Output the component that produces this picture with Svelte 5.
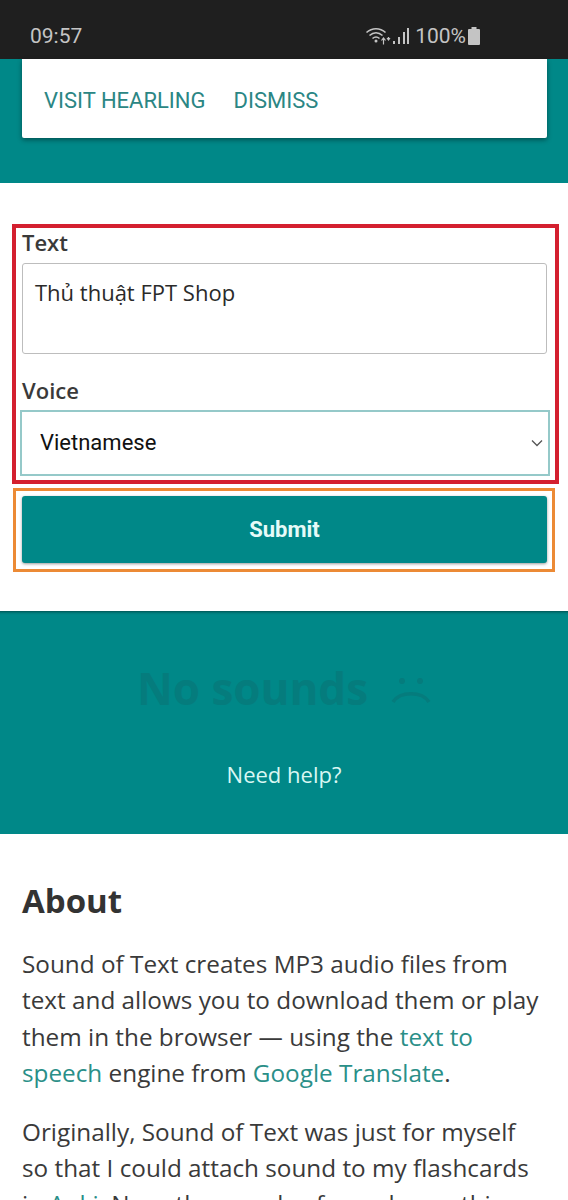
<script>
	let text = $state('Thủ thuật FPT Shop');
	let voice = $state('vi');
</script>

<div class="page">
	<header class="status">
		<span class="time">09:57</span>
		<div class="status-right">
			<svg class="wifi" width="26" height="20" viewBox="0 0 26 20" fill="none" stroke="#c4c4c4">
				<path d="M1.5 6.5C7 1.5 15 1.5 20.5 6.5" stroke-width="1.6" />
				<path d="M4.5 9.5C8.5 6 13.5 6 17.5 9.5" stroke-width="1.6" />
				<path d="M7.5 12.5C9.8 10.5 12.2 10.5 14.5 12.5" stroke-width="1.6" />
				<circle cx="11" cy="15" r="1.5" fill="#c4c4c4" stroke="none" />
				<path d="M16.5 14.5l2-2.5 2 2.5M18.5 12.5v6M22 12l1.5 2 1.5-2M23.5 14v-3" stroke-width="1.2" />
			</svg>
			<svg class="bars" width="17" height="18" viewBox="0 0 17 18" fill="#c4c4c4">
				<rect x="0" y="14" width="2" height="3" />
				<rect x="5" y="10" width="2" height="7" />
				<rect x="10" y="5" width="2" height="12" />
				<rect x="14" y="1" width="2" height="16" />
			</svg>
			<span class="pct">100%</span>
			<svg class="battery" width="12" height="18" viewBox="0 0 12 18" fill="#c4c4c4">
				<path d="M3.5 0h5v2h2.5a1 1 0 0 1 1 1v14a1 1 0 0 1-1 1h-10a1 1 0 0 1-1-1v-14a1 1 0 0 1 1-1h2.5z" />
			</svg>
		</div>
	</header>

	<section class="banner">
		<div class="card">
			<a href="#hearling">VISIT HEARLING</a>
			<a href="#dismiss">DISMISS</a>
		</div>
	</section>

	<section class="form-wrap">
		<div class="red-box">
			<label class="label" for="text">Text</label>
			<textarea id="text" bind:value={text}></textarea>
			<label class="label voice-label" for="voice">Voice</label>
			<div class="select-wrap">
				<select id="voice" bind:value={voice}>
					<option value="vi">Vietnamese</option>
				</select>
				<svg class="chevron" width="12" height="8" viewBox="0 0 12 8" fill="none" stroke="#555" stroke-width="1.3">
					<path d="M1 1.5l5 5 5-5" />
				</svg>
			</div>
		</div>
		<div class="orange-box">
			<button type="button">Submit</button>
		</div>
	</section>

	<section class="sounds">
		<div class="empty">
			<h2>No sounds</h2>
			<svg width="40" height="28" viewBox="0 0 40 28" fill="none" stroke="#057c7d" stroke-width="3.5">
				<circle cx="11" cy="5" r="3" fill="#057c7d" stroke="none" />
				<circle cx="29" cy="5" r="3" fill="#057c7d" stroke="none" />
				<path d="M2 26C9 15 31 15 38 26" />
			</svg>
		</div>
		<a class="help" href="#help">Need help?</a>
	</section>

	<section class="about">
		<h2>About</h2>
		<p>
			Sound of Text creates MP3 audio files from text and allows you to download them or play them
			in the browser — using the <a href="#tts">text to speech</a> engine from
			<a href="#translate">Google Translate</a>.
		</p>
		<p>
			Originally, Sound of Text was just for myself so that I could attach sound to my flashcards
			in <a href="#anki">Anki</a>. Now, thousands of people use this website every day.
		</p>
	</section>
</div>

<style>
	:global(body) {
		margin: 0;
		background: #fff;
	}

	.page {
		width: 568px;
		height: 1200px;
		overflow: hidden;
		font-family: 'Open Sans', sans-serif;
		color: #3a3a3a;
	}

	.status {
		height: 59px;
		box-sizing: border-box;
		background: #1f1f1f;
		color: #c4c4c4;
		font-family: Roboto, sans-serif;
		font-size: 21px;
		display: flex;
		justify-content: space-between;
		align-items: center;
		padding: 20px 88px 7px 30px;
	}

	.status-right {
		display: flex;
		align-items: center;
	}

	.wifi {
		margin-right: 2px;
	}

	.pct {
		margin: 0 2px 0 5px;
	}

	.banner {
		height: 124px;
		background: #008888;
		padding: 0 21px 0 22px;
	}

	.card {
		height: 79px;
		box-sizing: border-box;
		background: #fff;
		border-radius: 0 0 2px 2px;
		box-shadow: 0 2px 5px rgba(0, 0, 0, 0.4);
		padding: 4px 22px 0;
		display: flex;
		align-items: center;
		gap: 28px;
	}

	.card a {
		font-family: Roboto, sans-serif;
		font-size: 22px;
		color: #2b8684;
		text-decoration: none;
	}

	.form-wrap {
		height: 428px;
		box-sizing: border-box;
		padding: 41px 10px 0 12px;
	}

	.red-box {
		box-sizing: border-box;
		height: 260px;
		width: 547px;
		border: 4px solid #d4202f;
		padding: 0 6px;
		display: flex;
		flex-direction: column;
	}

	.label {
		font-size: 22px;
		font-weight: 600;
		line-height: 28px;
	}

	textarea {
		display: block;
		box-sizing: border-box;
		width: 525px;
		height: 91px;
		margin-top: 7px;
		border: 1px solid #bdbdbd;
		border-radius: 3px;
		padding: 13px 12px;
		font-family: 'Open Sans', sans-serif;
		font-size: 22px;
		line-height: 30px;
		color: #2a2a2a;
		resize: none;
		outline: none;
	}

	.voice-label {
		margin-top: 22px;
	}

	.select-wrap {
		position: relative;
		margin: 6px 0 0 -2px;
		width: 530px;
	}

	select {
		display: block;
		box-sizing: border-box;
		width: 530px;
		height: 66px;
		appearance: none;
		background: #fff;
		border: 2px solid #95c9c9;
		border-radius: 0;
		padding: 0 18px 1px;
		font-family: Roboto, sans-serif;
		font-size: 22px;
		color: #111;
		outline: none;
	}

	.chevron {
		position: absolute;
		right: 7px;
		top: 29px;
	}

	.orange-box {
		box-sizing: border-box;
		width: 542px;
		height: 84px;
		margin: 4px 0 0 1px;
		border: 3px solid #ec8a35;
		padding: 5px 6px;
	}

	button {
		display: block;
		width: 525px;
		height: 67px;
		border: none;
		border-radius: 3px;
		background: #008888;
		box-shadow: 0 1px 3px rgba(0, 0, 0, 0.4);
		font-family: Roboto, sans-serif;
		font-size: 22px;
		font-weight: 700;
		color: #e6fbf8;
	}

	.sounds {
		height: 223px;
		box-sizing: border-box;
		background: #008888;
		box-shadow: inset 0 4px 3px -3px rgba(0, 0, 0, 0.45);
		display: flex;
		flex-direction: column;
		align-items: center;
		padding-top: 47px;
	}

	.empty {
		display: flex;
		align-items: center;
		gap: 23px;
	}

	.empty svg {
		margin-top: 4px;
	}

	.empty h2 {
		margin: 0;
		font-size: 44px;
		line-height: 60px;
		font-weight: 700;
		color: #057c7d;
	}

	.help {
		margin-top: 41px;
		font-size: 22px;
		color: #d9f7f3;
		text-decoration: none;
	}

	.about {
		padding: 0 22px;
	}

	.about h2 {
		margin: 44px 0 0;
		font-size: 33px;
		line-height: 46px;
		font-weight: 700;
		color: #333;
	}

	.about p {
		margin: 22px 0 0;
		font-size: 24.3px;
		line-height: 36.4px;
	}

	.about a {
		color: #2a8f88;
		text-decoration: none;
	}
</style>
